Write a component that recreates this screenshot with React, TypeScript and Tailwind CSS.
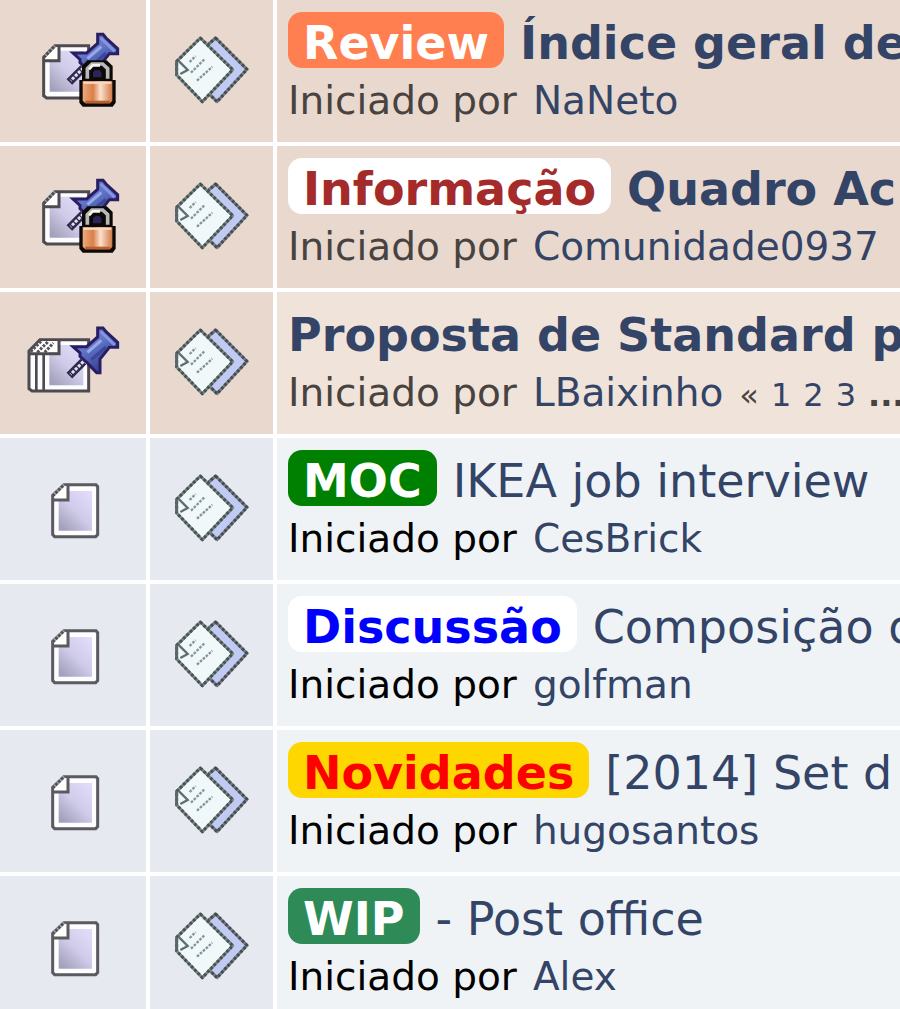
import type { ReactNode } from "react";

type Topic = {
  id: number;
  icon: "locked" | "hot" | "normal";
  badge?: string;
  badgeClass?: string;
  title: string;
  author: string;
  pages?: number[];
};

const topics: Topic[] = [
  { id: 1, icon: "locked", badge: "Review", badgeClass: "bg-[#ff7f50] text-white", title: "Índice geral de", author: "NaNeto" },
  { id: 2, icon: "locked", badge: "Informação", badgeClass: "bg-white text-[#a52a2a]", title: "Quadro Ac", author: "Comunidade0937" },
  { id: 3, icon: "hot", title: "Proposta de Standard pa", author: "LBaixinho", pages: [1, 2, 3] },
  { id: 4, icon: "normal", badge: "MOC", badgeClass: "bg-[#008000] text-white", title: "IKEA job interview", author: "CesBrick" },
  { id: 5, icon: "normal", badge: "Discussão", badgeClass: "bg-white text-[#0000ff]", title: "Composição d", author: "golfman" },
  { id: 6, icon: "normal", badge: "Novidades", badgeClass: "bg-[#ffd700] text-[#ff0000]", title: "[2014] Set d", author: "hugosantos" },
  { id: 7, icon: "normal", badge: "WIP", badgeClass: "bg-[#2e8b57] text-white", title: "- Post office", author: "Alex" },
];

const Gradients = () => (
  <defs>
    <linearGradient id="paper" x1="1" y1="0" x2="0.2" y2="1">
      <stop offset="0" stopColor="#e4defc" />
      <stop offset="0.55" stopColor="#cfcbe9" />
      <stop offset="1" stopColor="#a3a1bb" />
    </linearGradient>
    <linearGradient id="pin" x1="0" y1="0" x2="0.6" y2="1">
      <stop offset="0" stopColor="#5c6cc0" />
      <stop offset="0.45" stopColor="#6478cb" />
      <stop offset="1" stopColor="#333d8e" />
    </linearGradient>
    <linearGradient id="lock" x1="0" y1="0" x2="1" y2="0">
      <stop offset="0" stopColor="#eba97c" />
      <stop offset="0.35" stopColor="#d98049" />
      <stop offset="0.6" stopColor="#fbe0cc" />
      <stop offset="1" stopColor="#d27a45" />
    </linearGradient>
  </defs>
);

const Pin = () => (
  <g>
    <path d="M250 212L208 254" stroke="#2f2a4c" strokeWidth="24" />
    <path d="M250 212L212 250" stroke="#e2e2f0" strokeWidth="9" strokeDasharray="9 4" />
    <path
      d="M293 111H309L318 122L353 154V169H328L300 204V245H290L264 218L240 196V186L219 167H260L293 138Z"
      fill="url(#pin)"
      stroke="#2a1d62"
      strokeWidth="9"
    />
    <path d="M302 122L344 162" stroke="#8496dd" strokeWidth="9" />
    <path d="M262 184L304 148" stroke="#97a9e8" strokeWidth="9" />
    <path d="M274 206L318 168" stroke="#3b4799" strokeWidth="10" />
  </g>
);

const NormalIcon = () => (
  <svg viewBox="75 117 288 240" className="mx-auto block h-20 w-24" role="img" aria-label="Tópico normal">
    <Gradients />
    <path d="M158 196L192 164H288L293 170V314L287 320H164L158 314Z" fill="#fdfdff" stroke="#5a5a5f" strokeWidth="9" />
    <path d="M176 183H276V302H176Z" fill="url(#paper)" />
    <path d="M163 198L194 168H204V210H163Z" fill="#fff" />
    <path d="M158 198L192 164" stroke="#a5a5aa" strokeWidth="9" />
    <path d="M158 198L192 164" stroke="#505055" strokeWidth="9" strokeDasharray="8 4" />
    <path d="M159 210H204V164" fill="none" stroke="#5a5a5f" strokeWidth="9" />
  </svg>
);

const HotIcon = () => (
  <svg viewBox="75 96 288 240" className="mx-auto block h-20 w-24" role="img" aria-label="Tópico fixo">
    <Gradients />
    <path d="M87 180L120 146H266V300H96L87 293Z" fill="#fdfdff" stroke="#4d4b50" strokeWidth="9" />
    <path d="M148 162H250V283H148Z" fill="url(#paper)" />
    <path d="M92 184L122 150H174V184Z" fill="#fff" />
    <path d="M109 188V298M131 188V298" stroke="#4d4b50" strokeWidth="8" />
    <path d="M92 182L124 150M112 184L146 150M134 184L160 156" stroke="#555358" strokeWidth="9" strokeDasharray="8 4" />
    <path d="M87 188H177V146" fill="none" stroke="#4d4b50" strokeWidth="9" />
    <Pin />
  </svg>
);

const LockedIcon = () => (
  <svg viewBox="75 93 288 240" className="mx-auto block h-20 w-24" role="img" aria-label="Tópico fixo e bloqueado">
    <Gradients />
    <path d="M131 172L165 137H266V294H140L131 287Z" fill="#fdfdff" stroke="#4d4b50" strokeWidth="9" />
    <path d="M149 152H250V275H149Z" fill="url(#paper)" />
    <path d="M136 174L167 142H174V180H136Z" fill="#fff" />
    <path d="M131 172L165 137" stroke="#a39e9e" strokeWidth="9" />
    <path d="M131 172L165 137" stroke="#4d4b50" strokeWidth="9" strokeDasharray="8 4" />
    <path d="M131 182H177V137" fill="none" stroke="#4d4b50" strokeWidth="9" />
    <g transform="translate(0 -8)">
      <Pin />
    </g>
    <path d="M238 240H246V198L262 181H320L338 198V240H347V308L338 320H248L238 308Z" fill="#0c0906" />
    <path d="M262 236V206L276 192H308L323 206V236" fill="none" stroke="#b9b9b9" strokeWidth="11" />
    <path d="M267 208L278 196H300" fill="none" stroke="#f4f4f4" strokeWidth="8" />
    <path d="M279 232V216L286 210H298L304 216V232Z" fill="#2a2458" />
    <path d="M248 244H337V302L330 310H256L248 302Z" fill="url(#lock)" />
    <path d="M250 248H334" stroke="#fbd9c0" strokeWidth="7" />
    <path d="M256 306H330" stroke="#b9602c" strokeWidth="8" />
  </svg>
);

const PostsIcon = () => (
  <svg viewBox="521 93 228 240" className="mx-auto block h-20 w-[76px]" role="img" aria-label="Mensagens">
    <g strokeLinejoin="round">
      <path d="M646 114L740 208L650 305L604 260L604 150Z" fill="#c0caf3" stroke="#737b85" strokeWidth="9" />
      <path d="M646 114L740 208L650 305L604 260L604 150Z" fill="none" stroke="#454d50" strokeWidth="9" strokeDasharray="8 6" />
      <path d="M600 114L697 209L606 305L529 225V184Z" fill="#f0f8fa" stroke="#788483" strokeWidth="9" />
      <path d="M600 114L697 209L606 305L529 225V184Z" fill="none" stroke="#475352" strokeWidth="9" strokeDasharray="8 6" />
    </g>
    <path d="M529 184V224" stroke="#59676a" strokeWidth="8" />
    <path d="M534 182L562 210L540 222" fill="none" stroke="#5f6e72" strokeWidth="7" />
    <path d="M568 186L586 168M572 218L612 178M590 242L636 200" stroke="#84949b" strokeWidth="7" strokeDasharray="8 4" />
  </svg>
);

const icons: Record<Topic["icon"], ReactNode> = {
  locked: <LockedIcon />,
  hot: <HotIcon />,
  normal: <NormalIcon />,
};

const TopicRow = ({ topic }: { topic: Topic }) => {
  const sticky = topic.icon !== "normal";
  const iconBg = sticky ? "bg-[#e8d8ce]" : "bg-[#e6e9f0]";
  const textBg = topic.icon === "locked" ? "bg-[#e8d8ce]" : sticky ? "bg-[#f0e3d9]" : "bg-[#eff3f6]";

  return (
    <tr className="h-[146px]">
      <td className={`border-r-4 border-b-4 border-white p-0 align-middle ${iconBg}`}>{icons[topic.icon]}</td>
      <td className={`border-r-4 border-b-4 border-white p-0 align-middle ${iconBg}`}>
        <PostsIcon />
      </td>
      <td className={`overflow-hidden border-b-4 border-white pt-3 pl-[11px] align-top whitespace-nowrap ${textBg}`}>
        <div className="flex gap-4 text-[46px] leading-[50px]">
          {topic.badge && (
            <span className={`shrink-0 rounded-[14px] px-[15px] pt-1.5 font-bold ${topic.badgeClass}`}>{topic.badge}</span>
          )}
          <a href="#" className={`pt-1.5 text-[#334466] ${sticky ? "font-bold" : ""}`}>
            {topic.title}
          </a>
        </div>
        <div className={`mt-2 flex items-baseline gap-4 text-[39px] leading-[50px] ${sticky ? "text-[#484340]" : "text-black"}`}>
          <span>Iniciado por</span>
          <a href="#" className="text-[#334466]">
            {topic.author}
          </a>
          {topic.pages && (
            <small className="flex gap-3 text-[32px]">
              <span>«</span>
              {topic.pages.map((page) => (
                <a key={page} href="#" className="text-[#334466]">
                  {page}
                </a>
              ))}
              <b>...</b>
            </small>
          )}
        </div>
      </td>
    </tr>
  );
};

const App = () => {
  return (
    <main className="overflow-hidden bg-white font-['Verdana','DejaVu_Sans',sans-serif]">
      <table className="w-full table-fixed border-separate border-spacing-0">
        <colgroup>
          <col className="w-[150px]" />
          <col className="w-[127px]" />
          <col />
        </colgroup>
        <tbody>
          {topics.map((topic) => (
            <TopicRow key={topic.id} topic={topic} />
          ))}
        </tbody>
      </table>
    </main>
  );
};

export default App;
